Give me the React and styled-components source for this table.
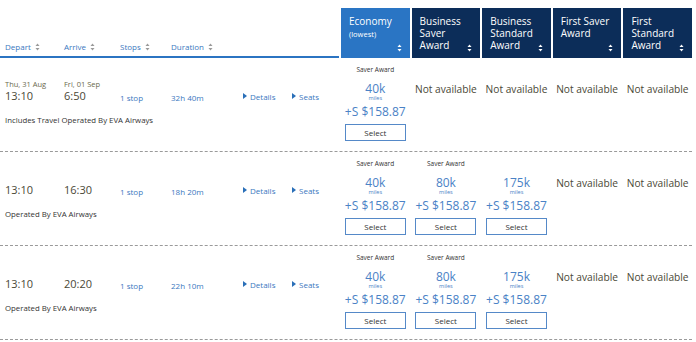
import React from "react";
import styled, { createGlobalStyle } from "styled-components";

const GlobalStyle = createGlobalStyle`
  body {
    margin: 0;
    background: #fff;
    font-family: "Open Sans", "Liberation Sans", sans-serif;
  }
`;

const flights = [
  {
    depDate: "Thu, 31 Aug",
    arrDate: "Fri, 01 Sep",
    dep: "13:10",
    arr: "6:50",
    stops: "1 stop",
    duration: "32h 40m",
    note: "Includes Travel Operated By EVA Airways",
    prices: [{ miles: "40k" }, null, null, null, null],
  },
  {
    dep: "13:10",
    arr: "16:30",
    stops: "1 stop",
    duration: "18h 20m",
    note: "Operated By EVA Airways",
    prices: [{ miles: "40k" }, { miles: "80k" }, { miles: "175k", noLabel: true }, null, null],
  },
  {
    dep: "13:10",
    arr: "20:20",
    stops: "1 stop",
    duration: "22h 10m",
    note: "Operated By EVA Airways",
    prices: [{ miles: "40k" }, { miles: "80k" }, { miles: "175k", noLabel: true }, null, null],
  },
];

const SortIcon = ({ color = "#9a9a9a" }) => (
  <svg width="5" height="8" viewBox="0 0 5 8">
    <path d="M2.5 0.5 L4.5 3 L0.5 3 Z" fill={color} />
    <path d="M2.5 7.5 L4.5 5 L0.5 5 Z" fill={color} />
  </svg>
);

const App = () => {
  return (
    <>
      <GlobalStyle />
      <Table>
        <HeaderRow>
          <LeftHead>
            <SortLabel>Depart <SortIcon /></SortLabel>
            <SortLabel>Arrive <SortIcon /></SortLabel>
            <SortLabel>Stops <SortIcon /></SortLabel>
            <SortLabel>Duration <SortIcon /></SortLabel>
          </LeftHead>
          <FareHead $active>
            <span>Economy</span>
            <Small>(lowest)</Small>
            <FareSort><SortIcon color="#fff" /></FareSort>
          </FareHead>
          <FareHead>
            <span>Business<br />Saver<br />Award</span>
            <FareSort><SortIcon color="#fff" /></FareSort>
          </FareHead>
          <FareHead>
            <span>Business<br />Standard<br />Award</span>
            <FareSort><SortIcon color="#fff" /></FareSort>
          </FareHead>
          <FareHead>
            <span>First Saver<br />Award</span>
            <FareSort><SortIcon color="#fff" /></FareSort>
          </FareHead>
          <FareHead>
            <span>First<br />Standard<br />Award</span>
            <FareSort><SortIcon color="#fff" /></FareSort>
          </FareHead>
        </HeaderRow>

        {flights.map((f, i) => (
          <Row key={i}>
            <LeftBlock>
              <DateText>{f.depDate}</DateText>
              <DateText>{f.arrDate}</DateText>
              <Spacer />
              <Time>{f.dep}</Time>
              <Time>{f.arr}</Time>
              <Info>{f.stops}</Info>
              <Info>{f.duration}</Info>
              <LinkText><Arrow />Details</LinkText>
              <LinkText><Arrow />Seats</LinkText>
              <Note>{f.note}</Note>
            </LeftBlock>
            {f.prices.map((p, j) =>
              p ? (
                <PriceCell key={j}>
                  <AwardLabel $hidden={p.noLabel}>Saver Award</AwardLabel>
                  <Miles>{p.miles}</Miles>
                  <MilesUnit>miles</MilesUnit>
                  <Price>+S $158.87</Price>
                  <SelectButton>Select</SelectButton>
                </PriceCell>
              ) : (
                <PriceCell key={j}>
                  <NotAvailable>Not available</NotAvailable>
                </PriceCell>
              )
            )}
          </Row>
        ))}
      </Table>
    </>
  );
};

const Table = styled.div`
  width: 692px;
`;

const HeaderRow = styled.div`
  display: grid;
  grid-template-columns: 339px repeat(5, 1fr);
  height: 58px;
  align-items: end;
`;

const LeftHead = styled.div`
  display: grid;
  grid-template-columns: 59px 56px 51px 72px;
  padding-left: 5px;
  height: 58px;
  align-items: end;
  padding-bottom: 4px;
  box-sizing: border-box;
  border-bottom: 2px solid #2b74c2;
`;

const SortLabel = styled.div`
  font-size: 8px;
  color: #3b78c0;
  display: flex;
  align-items: center;
  gap: 4px;
`;

const FareHead = styled.div`
  position: relative;
  margin-left: 2px;
  height: 50px;
  box-sizing: border-box;
  padding: 7px 0 0 8px;
  background: ${(p) => (p.$active ? "#2a75c4" : "#0c2d59")};
  color: #fff;
  font-size: 10px;
  line-height: 12px;
  display: flex;
  flex-direction: column;
`;

const Small = styled.span`
  font-size: 7.5px;
  line-height: 14px;
`;

const FareSort = styled.span`
  position: absolute;
  right: 8px;
  bottom: 6px;
  line-height: 0;
`;

const Row = styled.div`
  display: grid;
  grid-template-columns: 339px repeat(5, 1fr);
  height: 94px;
  box-sizing: border-box;
  border-bottom: 1px dashed #9a9a9a;
`;

const LeftBlock = styled.div`
  display: grid;
  grid-template-columns: 59px 56px 51px 72px 49px auto;
  grid-template-rows: 10px 14px auto;
  align-items: center;
  align-content: start;
  padding: 21px 0 0 5px;
`;

const DateText = styled.div`
  font-size: 7.5px;
  color: #6b6a4e;
  line-height: 10px;
`;

const Spacer = styled.div`
  grid-column: 3 / -1;
`;

const Time = styled.div`
  font-size: 11px;
  line-height: 14px;
  color: #4a4836;
`;

const Info = styled.div`
  font-size: 8px;
  color: #3b78c0;
  padding-top: 2px;
`;

const LinkText = styled.div`
  font-size: 8px;
  color: #3b78c0;
  display: flex;
  align-items: center;
  gap: 3px;
`;

const Arrow = styled.span`
  width: 0;
  height: 0;
  border-top: 3.5px solid transparent;
  border-bottom: 3.5px solid transparent;
  border-left: 4px solid #2a6fb8;
`;

const Note = styled.div`
  grid-column: 1 / -1;
  margin-top: 12px;
  font-size: 7.8px;
  color: #333;
  line-height: 10px;
`;

const PriceCell = styled.div`
  margin-left: 2px;
  display: flex;
  flex-direction: column;
  align-items: center;
  padding-top: 7px;
`;

const AwardLabel = styled.div`
  font-size: 6.5px;
  line-height: 10px;
  color: #333;
  visibility: ${(p) => (p.$hidden ? "hidden" : "visible")};
`;

const Miles = styled.div`
  margin-top: 8px;
  font-size: 12px;
  line-height: 12px;
  color: #4a82c6;
`;

const MilesUnit = styled.div`
  font-size: 5.5px;
  line-height: 7px;
  color: #4a82c6;
`;

const Price = styled.div`
  margin-top: 3px;
  font-size: 12px;
  line-height: 13px;
  color: #4a82c6;
`;

const SelectButton = styled.button`
  margin-top: 6px;
  width: 61px;
  height: 17px;
  padding: 0;
  background: #fff;
  border: 1px solid #5589c8;
  font-family: "Open Sans", "Liberation Sans", sans-serif;
  font-size: 8px;
  color: #333;
`;

const NotAvailable = styled.div`
  margin-top: 17px;
  font-size: 10.2px;
  line-height: 14px;
  color: #4a4836;
  white-space: nowrap;
`;

export default App;
